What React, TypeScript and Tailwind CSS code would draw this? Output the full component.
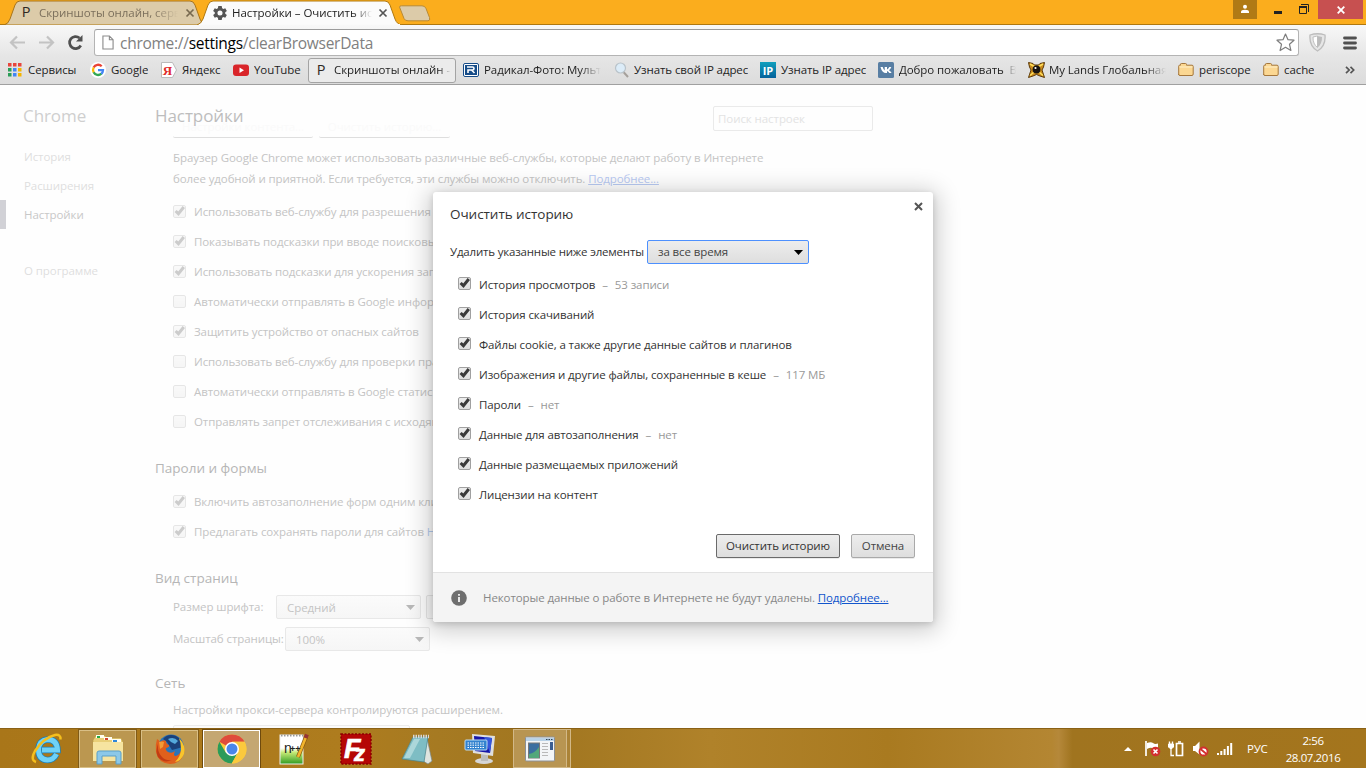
import React from "react";

const FADE = "[mask-image:linear-gradient(to_right,black_82%,transparent)]";

/* ---------- Title bar ---------- */

function PIcon() {
  return <span className="flex h-4 w-4 items-center justify-center text-[14.5px] font-medium leading-none text-[#2e2823]">P</span>;
}

function Gear() {
  return (
    <svg width="16" height="16" viewBox="0 0 24 24" fill="#555">
      <path
        fillRule="evenodd"
        d="M19.8 13.1a8 8 0 0 0 0-2.2l2.5-1.9-2.4-4.1-2.9 1.2a8 8 0 0 0-1.9-1.1L14.6 1.500h-5.200l-.5 3.500a8 8 0 0 0-1.900 1.100L4.100 4.900 1.700 9l2.500 1.900a8 8 0 0 0 0 2.200L1.700 15l2.400 4.100 2.900-1.200a8 8 0 0 0 1.900 1.100l.5 3.500h5.200l.5-3.500a8 8 0 0 0 1.900-1.100l2.900 1.200 2.400-4.100zM12 15.800a3.800 3.800 0 1 1 0-7.600 3.800 3.800 0 0 1 0 7.600z"
      />
    </svg>
  );
}

function TabClose({ color }: { color: string }) {
  return (
    <svg width="10" height="10" viewBox="0 0 10 10" stroke={color} strokeWidth="1.7">
      <path d="M1.500 1.500L8.500 8.500M8.500 1.500L1.500 8.500" />
    </svg>
  );
}

function TitleBar() {
  return (
    <div className="relative flex h-[25px] shrink-0 bg-[#fbad1d] shadow-[inset_0_-1px_#b0780f]">
      <div className="relative ml-[5px] flex h-[25px] w-[192px] items-center pl-[13px]">
        <svg className="absolute left-0 top-0" width="202" height="25" viewBox="0 0 202 25">
          <path d="M0 24.500Q3 24 5 19L10 5Q11.500 1 15 1H185Q188.500 1 190 5L195 19Q197 24.500 200 24.500" fill="#dccba9" stroke="#a9751b" />
        </svg>
        <div className="relative flex items-center">
          <PIcon />
          <span className={`ml-[5px] mt-[1px] w-[139px] overflow-hidden whitespace-nowrap text-[11.5px] leading-[16px] tracking-[-0.05px] text-[#7b6f5c] ${FADE}`}>
            Скриншоты онлайн, серви
          </span>
          <span className="ml-[7px]"><TabClose color="#77694f" /></span>
        </div>
      </div>
      <div className="relative flex h-[25px] w-[206px] items-center pl-[15px]">
        <svg className="absolute left-0 top-0" width="207" height="25" viewBox="0 0 207 25">
          <path d="M0 25Q4 24 6 19L11 5Q12.500 1 16 1H188Q191.500 1 193 5L198 19Q200 24.500 205 25" fill="#fbfbfb" stroke="#b0780f" />
          <path d="M2 25H203" stroke="#fafafa" strokeWidth="2" />
        </svg>
        <div className="relative flex items-center">
          <Gear />
          <span className="ml-[4px] mt-[1px] w-[140px] overflow-hidden whitespace-nowrap text-[11.5px] leading-[16px] tracking-[-0.05px] text-[#222] [mask-image:linear-gradient(to_right,black_86%,transparent)]">
            Настройки – Очистить ист
          </span>
          <span className="ml-[6px]"><TabClose color="#555" /></span>
        </div>
      </div>
      <svg className="-ml-[5px] mt-[5px]" width="34" height="17" viewBox="0 0 34 17">
        <path d="M1.500 2Q1.500 .8 3.500 .8H24Q27 .8 28 3.500L31.500 12.500Q32.500 15.800 30 15.800H10Q7 15.800 6 13.500Z" fill="#dccba9" stroke="#b98a35" />
      </svg>
      <div className="ml-auto flex h-[19px] items-center">
        <div className="flex h-[19px] w-[24px] items-center justify-center bg-[#b07a15]">
          <svg className="mb-[2px]" width="10" height="10" viewBox="0 0 10 10" fill="#fff">
            <circle cx="5" cy="2.800" r="2" />
            <path d="M1 9V7.800Q1 5.800 5 5.800T9 7.800V9Z" />
          </svg>
        </div>
        <svg className="ml-[17px]" width="8" height="19"><path d="M0 12.500H8" stroke="#222" strokeWidth="3" /></svg>
        <svg className="ml-[17px]" width="11" height="19" viewBox="0 0 11 19" fill="none" stroke="#222">
          <path d="M2 4.500H9.500V12" />
          <path d="M.5 7H7.500V13.500H.5Z" />
          <path d="M0 7H8" strokeWidth="2" />
        </svg>
        <div className="ml-[8px] mr-[3px] flex h-[19px] w-[45px] items-center justify-center bg-[#c75050]">
          <svg width="8" height="8" viewBox="0 0 8 8" stroke="#fff" strokeWidth="1.800"><path d="M.7 .7L7.300 7.300M7.300 .7L.7 7.300" /></svg>
        </div>
      </div>
    </div>
  );
}

/* ---------- Toolbar ---------- */

function Toolbar() {
  return (
    <div className="flex h-[31px] shrink-0 items-center bg-linear-to-b from-[#f8f8f8] to-[#e6e6e6] pt-[4px]">
      <svg className="ml-[9px]" width="17" height="15" viewBox="0 0 17 15" fill="none" stroke="#c3c3c3" strokeWidth="2.200">
        <path d="M16 7.500H2M8 1.500L2 7.500L8 13.500" />
      </svg>
      <svg className="ml-[12px]" width="17" height="15" viewBox="0 0 17 15" fill="none" stroke="#c3c3c3" strokeWidth="2.200">
        <path d="M1 7.500H15M9 1.500L15 7.500L9 13.500" />
      </svg>
      <svg className="ml-[12px]" width="18" height="17" viewBox="0 0 18 17" fill="none" stroke="#505050" strokeWidth="2.700">
        <path d="M13.800 11.500A6 6 0 1 1 12.500 4" />
        <path d="M15.500 1V7.500H9Z" fill="#505050" stroke="none" />
      </svg>
      <div className="ml-[9px] flex h-[27px] w-[1205px] items-center rounded-[3px] border border-[#b4b4b4] border-t-[#9b9b9b] bg-white">
        <svg className="ml-[7px]" width="12" height="15" viewBox="0 0 13 16" fill="none" stroke="#8b8b8b" strokeWidth="1.200">
          <path d="M1 1H8L12 5V15H1ZM8 1V5H12" />
        </svg>
        <span className="ml-[6px] text-[15.5px] leading-[20px] tracking-[-0.27px] text-[#808080]">
          chrome://<span className="text-black">settings</span>/clearBrowserData
        </span>
        <svg className="ml-auto mr-[3px]" width="19" height="19" viewBox="0 0 19 19" fill="#fff" stroke="#7d7d7d" strokeWidth="1.200" strokeLinejoin="round">
          <path d="M9.500 1L12 6.700L18 7.200L13.500 11.300L14.900 17.500L9.500 14.300L4.100 17.500L5.500 11.300L1 7.200L7 6.700Z" />
        </svg>
      </div>
      <svg className="ml-[10px]" width="17" height="19" viewBox="0 0 17 19">
        <path d="M1 2Q8.500 -.5 16 2Q17 13 8.500 18Q0 13 1 2Z" fill="#e6e6e6" stroke="#bdbdbd" strokeWidth="1.300" />
        <path d="M4 4Q8.500 3 8.500 3V14.500Q3.800 11 4 4Z" fill="#fff" stroke="#c0c0c0" />
        <path d="M8.500 3L13 4Q13.200 11 8.500 14.500Z" fill="#bcbcbc" />
      </svg>
      <svg className="ml-[17px]" width="14" height="14" viewBox="0 0 14 14" stroke="#505050" strokeWidth="2.800" strokeLinecap="round">
        <path d="M1.500 2H12.500M1.500 7H12.500M1.500 12H12.500" />
      </svg>
    </div>
  );
}

/* ---------- Bookmarks ---------- */

const appColors = ["#e8453c", "#e8453c", "#e8453c", "#2a9d57", "#4285f4", "#f4b400", "#2a9d57", "#4285f4", "#f4b400"];

function AppsIcon() {
  return (
    <svg width="14" height="14" viewBox="0 0 14 14">
      {appColors.map((c, i) => (
        <rect key={i} x={(i % 3) * 5} y={Math.floor(i / 3) * 5} width="3.500" height="3.500" fill={c} />
      ))}
    </svg>
  );
}

function GoogleIcon() {
  return (
    <svg width="16" height="16" viewBox="0 0 16 16">
      <circle cx="8" cy="8" r="8" fill="#fff" />
      <g fill="none" strokeWidth="2.300">
        <path d="M11.700 4.300A5 5 0 0 0 3.600 5.600" stroke="#ea4335" />
        <path d="M3.700 5.500A5 5 0 0 0 3.700 10.500" stroke="#fbbc05" />
        <path d="M3.600 10.300A5 5 0 0 0 11.400 11.700" stroke="#34a853" />
        <path d="M8 8.200H13A5 5 0 0 1 11.300 11.800" stroke="#4285f4" />
      </g>
    </svg>
  );
}

function YandexIcon() {
  return (
    <svg width="16" height="16" viewBox="0 0 16 16">
      <path d="M.5 .5H11.500L15.500 8L11.500 15.500H.5Z" fill="#fff" stroke="#bbb" />
      <text x="6.500" y="12.500" textAnchor="middle" fontFamily="Liberation Serif" fontWeight="700" fontSize="13" fill="#e02a2a">Я</text>
    </svg>
  );
}

function YoutubeIcon() {
  return (
    <svg width="16" height="16" viewBox="0 0 16 16">
      <rect y="2.500" width="16" height="11.500" rx="3" fill="#d9252a" />
      <path d="M6.500 5.500L11 8.200L6.500 11Z" fill="#fff" />
    </svg>
  );
}

function RadikalIcon() {
  return (
    <svg width="16" height="16" viewBox="0 0 16 16" fill="none">
      <rect x=".5" y="1.500" width="15" height="13" rx="1.500" fill="#fff" stroke="#164c88" />
      <rect x="2" y="3" width="12" height="10" fill="#164c88" />
      <path d="M5 11V8H9.500Q11 8 11 6.500T9.500 5H4M8.500 8L11.500 11" stroke="#fff" strokeWidth="1.600" />
    </svg>
  );
}

function LoupeIcon() {
  return (
    <svg width="16" height="16" viewBox="0 0 16 16" fill="none">
      <path d="M9.500 10L14 15" stroke="#a5a09b" strokeWidth="2" />
      <circle cx="6.500" cy="6" r="5" fill="#dcecf8" stroke="#b9c3ca" strokeWidth="1.200" />
    </svg>
  );
}

function IpIcon() {
  return (
    <span className="flex h-4 w-4 items-center justify-center bg-linear-to-b from-[#12a0bd] to-[#07629b] text-[11px] font-bold leading-none text-white">
      IP
    </span>
  );
}

function VkIcon() {
  return (
    <svg width="16" height="16" viewBox="0 0 16 16">
      <rect width="16" height="16" rx="1.500" fill="#587ea3" />
      <path d="M2.500 5H4.700Q5.300 7.500 6.700 8.500V5H9V7.500Q10.500 6.800 11.300 5H13.300Q12.700 7 11 8.200Q12.800 9.300 13.600 11H11.300Q10.500 9.600 9 9.100V11H8Q4 11 2.500 5Z" fill="#fff" />
    </svg>
  );
}

function LandsIcon() {
  return (
    <svg width="17" height="16" viewBox="0 0 17 16">
      <path d="M.5 .5L5 1.500L6.500 3H10.500L12 1.500L16.500 .5L15.500 5L14 8L16.500 15.500L12 14L8.500 12.500L5 14L.5 15.500L3 8L1.500 5Z" fill="#c98a1b" stroke="#5b3a0c" />
      <path d="M2 2L7 5M15 2L10 5M2 13.500L6 10M15 13.500L11 10" stroke="#ffdf5c" strokeWidth="1.500" />
      <circle cx="8.500" cy="7.500" r="3.900" fill="#17120e" />
      <circle cx="7.500" cy="6" r="1.100" fill="#fff" />
    </svg>
  );
}

function FolderIcon() {
  return (
    <svg width="16" height="16" viewBox="0 0 16 16">
      <path d="M.7 13V4.200Q.7 3.200 1.700 3.200H2.500V2.200Q2.500 1.500 3.500 1.500H7.500Q8.500 1.500 8.500 2.500V3.200H14Q15.200 3.200 15.200 4.500V12Q15.200 13.500 14 13.500H2Q.7 13.500 .7 12.500Z" fill="#fbd792" stroke="#a5773c" />
      <path d="M1.500 5H14.500" stroke="#fff0c9" />
    </svg>
  );
}

type Bookmark = { label: string; icon: React.ReactNode; width: string; text: string };

const bookmarks: Bookmark[] = [
  { label: "Сервисы", icon: <AppsIcon />, width: "w-[82px]", text: "ml-[6px]" },
  { label: "Google", icon: <GoogleIcon />, width: "w-[71px]", text: "ml-[5px]" },
  { label: "Яндекс", icon: <YandexIcon />, width: "w-[72px]", text: "ml-[5px]" },
  { label: "YouTube", icon: <YoutubeIcon />, width: "w-[75px]", text: "ml-[5px]" },
  { label: "Скриншоты онлайн -", icon: <PIcon />, width: "w-[148px] h-[25px] pl-[4px] mr-[7px] rounded-[3px] border border-[#a3a3a3] bg-[#ebebeb]", text: "ml-[5px] w-[117px] [mask-image:linear-gradient(to_right,black_90%,transparent)]" },
  { label: "Радикал-Фото: Мультих", icon: <RadikalIcon />, width: "w-[151px]", text: "ml-[5px] w-[117px] " + FADE },
  { label: "Узнать свой IP адрес", icon: <LoupeIcon />, width: "w-[146px]", text: "ml-[4px]" },
  { label: "Узнать IP адрес", icon: <IpIcon />, width: "w-[118px]", text: "ml-[5px]" },
  { label: "Добро пожаловать  Вк", icon: <VkIcon />, width: "w-[150px]", text: "ml-[5px] w-[117px] [mask-image:linear-gradient(to_right,black_88%,transparent)]" },
  { label: "My Lands Глобальная", icon: <LandsIcon />, width: "w-[150px]", text: "ml-[4px] w-[117px] " + FADE },
  { label: "periscope", icon: <FolderIcon />, width: "w-[85px]", text: "ml-[5px]" },
  { label: "cache", icon: <FolderIcon />, width: "w-[82px]", text: "ml-[5px]" },
];

function Bookmarks() {
  return (
    <div className="flex h-[29px] shrink-0 items-center border-b border-[#a0a0a0] bg-linear-to-b from-[#e6e6e6] to-[#dcdcdc] pl-[8px]">
      {bookmarks.map((b) => (
        <div key={b.label} className={`flex shrink-0 items-center ${b.width}`}>
          <span className="shrink-0">{b.icon}</span>
          <span className={`overflow-hidden whitespace-pre text-[11.5px] leading-[18px] tracking-[-0.09px] text-[#1e1e1e] ${b.text}`}>{b.label}</span>
        </div>
      ))}
      <svg width="10" height="8" viewBox="0 0 10 8" fill="none" stroke="#555" strokeWidth="1.700"><path d="M1 .8L4.200 4L1 7.200M5.500 .8L8.700 4L5.500 7.200" /></svg>
    </div>
  );
}

/* ---------- Settings page ---------- */

function Checkbox({ checked = true, faded = false }: { checked?: boolean; faded?: boolean }) {
  return (
    <span className={`relative mb-[1px] flex h-[13px] w-[13px] shrink-0 items-center justify-center rounded-[2px] border border-[#a0a0a0] bg-linear-to-b from-[#ededed] to-[#dedede] ${faded ? "opacity-25" : ""}`}>
      {checked && (
        <svg className="absolute -top-[1px] left-0" width="12" height="12" viewBox="0 0 12 12" fill="none" stroke="#3a3a3a" strokeWidth="3">
          <path d="M1.600 6L4.400 8.700L9.800 2" />
        </svg>
      )}
    </span>
  );
}

function SettingRow({ label, checked, link }: { label: string; checked: boolean; link?: string }) {
  return (
    <div className="flex h-[30px] items-center pl-[18px]">
      <Checkbox checked={checked} faded />
      <span className="ml-[8px] whitespace-nowrap tracking-[-0.1px]">
        {label}
        {link && <span className="text-[#b5cdf0]"> {link}</span>}
      </span>
    </div>
  );
}

const privacyRows: [string, boolean][] = [
  ["Использовать веб-службу для разрешения", true],
  ["Показывать подсказки при вводе поисковых", true],
  ["Использовать подсказки для ускорения загр", true],
  ["Автоматически отправлять в Google информ", false],
  ["Защитить устройство от опасных сайтов", true],
  ["Использовать веб-службу для проверки пра", false],
  ["Автоматически отправлять в Google статис", false],
  ["Отправлять запрет отслеживания с исходящ", false],
];

function FadedSelect({ value }: { value: string }) {
  return (
    <div className="flex h-[24px] w-[145px] items-center justify-between rounded-[2px] border border-[#e8e8e8] bg-linear-to-b from-[#fbfbfb] to-[#f6f6f6] pl-[10px] pr-[5px]">
      <span className="mt-[1px]">{value}</span>
      <svg width="9" height="5"><path d="M0 0H9L4.500 5Z" fill="#b9b9b9" /></svg>
    </div>
  );
}

function SectionTitle({ children, className = "mt-[19px]" }: { children: React.ReactNode; className?: string }) {
  return <h2 className={`h-[24px] text-[13.5px] leading-[24px] tracking-[0px] text-[#b6b6b6] ${className}`}>{children}</h2>;
}

function SettingsPage() {
  return (
    <div className="flex h-full text-[11.5px] leading-[20px] tracking-[-0.075px] text-[#c4c4c4]">
      <nav className="flex w-[155px] shrink-0 flex-col">
        <h1 className="mt-[19px] pl-[23px] text-[17px] leading-[24px] text-[#cfcfcf]">Chrome</h1>
        <div className="mt-[14px] h-[29px] pl-[24px] leading-[29px] text-[#dedede]">История</div>
        <div className="h-[29px] pl-[24px] leading-[29px] text-[#dedede]">Расширения</div>
        <div className="h-[29px] border-l-[6px] border-[#d1d1d6] pl-[18px] leading-[29px] text-[#c8c8c8]">Настройки</div>
        <div className="mt-[27px] h-[29px] pl-[24px] leading-[29px] text-[#dedede]">О программе</div>
      </nav>
      <main className="w-[718px]">
        <header className="relative flex h-[53px] items-start justify-between">
          <div className="absolute bottom-0 left-[18px] flex gap-[6px]">
            <span className="h-[22px] w-[140px] rounded-b-[2px] border-b border-[#dedede] text-center leading-[22px] text-[#fafafa]">Настройки контента...</span>
            <span className="h-[22px] w-[131px] rounded-b-[2px] border-b border-[#dedede] text-center leading-[22px] text-[#fafafa]">Очистить историю...</span>
          </div>
          <h1 className="relative mt-[19px] text-[17px] leading-[24px] text-[#bdbdbd]">Настройки</h1>
          <div className="mt-[21px] flex h-[25px] w-[160px] items-center rounded-[2px] border border-[#eaeaea] pl-[4px] text-[#e3e3e3]">Поиск настроек</div>
        </header>
        <p className="mt-[9px] whitespace-nowrap pl-[18px] leading-[21px]">
          Браузер Google Chrome может использовать различные веб-службы, которые делают работу в Интернете
          <br />
          <span className="tracking-[-0.1px]">более удобной и приятной. Если требуется, эти службы можно отключить. <a className="text-[#b8c9f2] underline">Подробнее...</a></span>
        </p>
        <div className="mt-[8px]">
          {privacyRows.map(([label, checked]) => (
            <SettingRow key={label} label={label} checked={checked} />
          ))}
        </div>
        <SectionTitle>Пароли и формы</SectionTitle>
        <div className="mt-[7px]">
          <SettingRow label="Включить автозаполнение форм одним клик" checked />
          <SettingRow label="Предлагать сохранять пароли для сайтов" checked link="На" />
        </div>
        <SectionTitle>Вид страниц</SectionTitle>
        <div className="mt-[5px] flex items-center pl-[18px]">
          <span className="w-[103px]">Размер шрифта:</span>
          <FadedSelect value="Средний" />
          <div className="ml-[5px] h-[24px] w-[140px] rounded-[2px] border border-[#e5e5e5] bg-[#f9f9f9]" />
        </div>
        <div className="mt-[8px] flex items-center pl-[18px]">
          <span className="w-[112px] whitespace-nowrap">Масштаб страницы:</span>
          <FadedSelect value="100%" />
        </div>
        <SectionTitle className="mt-[20px]">Сеть</SectionTitle>
        <p className="mt-[5px] pl-[18px]">Настройки прокси-сервера контролируются расширением.</p>
        <div className="ml-[18px] mt-[5px] h-[24px] w-[237px] rounded-[2px] border border-[#ececec] bg-[#fbfbfb]" />
      </main>
    </div>
  );
}

/* ---------- Dialog ---------- */

const clearItems: [string, string?][] = [
  ["История просмотров", "53 записи"],
  ["История скачиваний"],
  ["Файлы cookie, а также другие данные сайтов и плагинов"],
  ["Изображения и другие файлы, сохраненные в кеше", "117 МБ"],
  ["Пароли", "нет"],
  ["Данные для автозаполнения", "нет"],
  ["Данные размещаемых приложений"],
  ["Лицензии на контент"],
];

function ClearDialog() {
  return (
    <div className="absolute left-[433px] top-[107px] flex h-[430px] w-[500px] flex-col rounded-[3px] bg-white text-[11.5px] tracking-[-0.11px] text-[#333] shadow-[0_4px_23px_5px_rgba(0,0,0,0.2),0_2px_6px_rgba(0,0,0,0.15)]">
      <div className="flex items-start justify-between pl-[17px] pr-[10px]">
        <h2 className="mt-[12px] text-[13.5px] leading-[20px] tracking-[-0.05px]">Очистить историю</h2>
        <svg className="mt-[10px]" width="9" height="9" viewBox="0 0 9 9" stroke="#555" strokeWidth="2"><path d="M1 1L8 8M8 1L1 8" /></svg>
      </div>
      <div className="mt-[16px] flex items-center pl-[17px]">
        <span className="w-[197px] whitespace-nowrap tracking-[-0.19px]">Удалить указанные ниже элементы</span>
        <div className="flex h-[24px] w-[162px] items-center justify-between rounded-[2px] border border-[#4d90fe] bg-linear-to-b from-[#ededed] to-[#dedede] pl-[10px] pr-[5px] text-[#444]">
          <span>за все время</span>
          <svg width="9" height="5"><path d="M0 0H9L4.500 5Z" fill="#000" /></svg>
        </div>
      </div>
      <div className="mt-[5px] flex flex-col">
        {clearItems.map(([label, extra]) => (
          <div key={label} className="flex h-[30px] items-center pl-[25px]">
            <Checkbox />
            <span className="ml-[8px] mt-[2px] whitespace-nowrap">{label}</span>
            {extra && (
              <span className="ml-[7px] mt-[2px] flex gap-[7px] whitespace-nowrap text-[#999]">
                <span>–</span>
                <span>{extra}</span>
              </span>
            )}
          </div>
        ))}
      </div>
      <div className="mt-[25px] flex justify-end gap-[11px] pr-[18px]">
        <button className="h-[24px] w-[124px] whitespace-nowrap rounded-[2px] border border-[#6a6a6a] bg-linear-to-b from-[#ededed] to-[#dedede] text-[#333] shadow-[0_1px_0_rgba(0,0,0,0.08)]">Очистить историю</button>
        <button className="h-[24px] w-[64px] rounded-[2px] border border-[#a9a9a9] bg-linear-to-b from-[#ededed] to-[#dedede] text-[#444] shadow-[0_1px_0_rgba(0,0,0,0.08)]">Отмена</button>
      </div>
      <div className="mt-auto flex h-[50px] items-center rounded-b-[3px] border-t border-[#e2e2e2] bg-[#f4f4f4] pl-[18px]">
        <svg width="16" height="16" viewBox="0 0 16 16">
          <circle cx="8" cy="8" r="7.800" fill="#6e6e6e" />
          <path d="M8 7V12M8 4V5.800" stroke="#f4f4f4" strokeWidth="1.800" />
        </svg>
        <span className="ml-[16px] whitespace-nowrap tracking-[-0.1px] text-[#888]">
          Некоторые данные о работе в Интернете не будут удалены. <a className="text-[#1155cc] underline">Подробнее...</a>
        </span>
      </div>
    </div>
  );
}

/* ---------- Taskbar ---------- */

function IeIcon() {
  return (
    <svg width="32" height="32" viewBox="0 0 32 32" fill="none">
      <path d="M25.500 21Q22.500 27 16.500 27Q7.500 26.500 7.500 16.500Q8 7.500 16.500 6.500Q26 6.500 26.500 17H11" stroke="#1c7fb8" strokeWidth="6.500" />
      <path d="M25.500 21Q22.500 27 16.500 27Q7.500 26.500 7.500 16.500Q8 7.500 16.500 6.500Q26 6.500 26.500 17H11" stroke="#6fd2f7" strokeWidth="5" />
      <path d="M5 29Q-1 27 4 18Q12 5 24 2Q30 1 29.500 6.500" stroke="#f5bf1c" strokeWidth="2.500" />
    </svg>
  );
}

function ExplorerIcon() {
  return (
    <svg width="32" height="32" viewBox="0 0 32 32">
      <path d="M3 4Q3 2.500 5 2.500H13L15 5H29L31 9V28H1V7Z" fill="#e9cf78" stroke="#b99a45" strokeWidth=".7" />
      <path d="M4 2H12V5H4ZM12 4H20V7H12ZM20 6H29V9H20Z" fill="#fffdf0" />
      <path d="M5 3H8V5H5Z" fill="#28a745" /><path d="M13 5H16V7H13Z" fill="#d4442d" /><path d="M21 7H25V9H21Z" fill="#2f87d8" />
      <path d="M1 9H31V28H1Z" fill="#f6e4a0" />
      <path d="M5 31V20Q5 18 7 18H27Q29 18 29 20V31H24V23H10V31Z" fill="#8cc8e8" stroke="#5b9fc7" />
    </svg>
  );
}

function FirefoxIcon() {
  return (
    <svg width="32" height="32" viewBox="0 0 32 32">
      <circle cx="17" cy="14.500" r="13" fill="#2a74b8" />
      <path d="M9 6Q14 0 22 3Q29 7 29 14L18 17L13 9Z" fill="#1b4079" />
      <path d="M14 6Q20 3 24 8L21 11Q17 10 14 6Z" fill="#55a9dc" />
      <path d="M3 6Q5 7 6 9Q9 6 12 8Q12 11 15 12Q16 14 12 15Q11 17 14 19Q18 21 21 18Q18 25 24 22Q29 18 27 10Q31 14 30 20Q27 31 16 31Q4 30 2 19Q1 12 3 6Z" fill="#e0601c" />
      <path d="M25 5Q32 12 30 21Q27 28 21 29Q27 23 27 16Q27 10 25 5Z" fill="#f9c52b" />
      <path d="M4 11Q3 19 8 24Q12 28 18 27Q10 31 4 24Q1 18 4 11Z" fill="#c23c14" />
      <path d="M5 9Q8 8 10 9L9 14L6 16Z" fill="#f49a35" />
    </svg>
  );
}

function ChromeIcon() {
  return (
    <svg width="32" height="32" viewBox="0 0 32 32">
      <circle cx="16" cy="16" r="14.500" fill="#fbc93d" />
      <path d="M16 16L3.400 8.800A14.500 14.500 0 0 1 28.600 8.800H16Z" fill="#df4b3c" />
      <path d="M3.400 8.800A14.500 14.500 0 0 0 15.600 30.500L22 19.500L16 16L9.700 19.600Z" fill="#2b9b5a" />
      <path d="M22 19L16 30.500A14.500 14.500 0 0 0 28.600 8.800H16Z" fill="#fbc93d" />
      <circle cx="16" cy="16" r="7" fill="#fff" /><circle cx="16" cy="16" r="5.500" fill="#4a86ea" />
    </svg>
  );
}

function NotepadPlusIcon() {
  return (
    <svg width="32" height="34" viewBox="0 0 32 34">
      <defs><linearGradient id="np" x1="0" y1="0" x2="0" y2="1"><stop offset=".45" stopColor="#fff" /><stop offset=".6" stopColor="#c6ea77" /><stop offset="1" stopColor="#2f9b22" /></linearGradient></defs>
      <rect x="3" y="3" width="23" height="29" fill="url(#np)" stroke="#eee" />
      <path d="M4 3.500H26" stroke="#999" strokeWidth="2" strokeDasharray="1.500 1.500" />
      <path d="M29 5L21 25" stroke="#8a5a10" strokeWidth="4" /><path d="M29 5L21 25" stroke="#f3b52d" strokeWidth="2.600" />
      <path d="M30 2.500L28.500 6" stroke="#963434" strokeWidth="4" />
      <text x="7" y="21" fontFamily="Liberation Sans" fontSize="14" fill="#222" letterSpacing="-1.500">n</text>
      <text x="13" y="19.500" fontFamily="Liberation Sans" fontWeight="700" fontSize="9" fill="#222">++</text>
    </svg>
  );
}

function FileZillaIcon() {
  return (
    <svg width="32" height="32" viewBox="0 0 32 32" fontFamily="Liberation Sans" fontWeight="700" fontStyle="italic" fill="#fff" stroke="#fff">
      <rect x="1" y="1" width="30" height="30" fill="#b50606" stroke="#8c0000" strokeWidth="1.500" strokeDasharray="2 1.500" />
      <text x="4" y="25" fontSize="27" strokeWidth=".7">
        F<tspan x="14" y="27.500" fontSize="22">z</tspan>
      </text>
    </svg>
  );
}

function NotepadIcon() {
  return (
    <svg width="32" height="32" viewBox="0 0 32 32">
      <path d="M26 5L31 28L27 31L22 28Z" fill="#dfe5df" stroke="#78878a" strokeWidth=".7" />
      <path d="M12 4H27L23 29L1 26Z" fill="#7ebdc4" stroke="#4a838a" strokeWidth=".7" />
      <path d="M13 6H19L9 25L3 25Z" fill="#c1e2e4" opacity=".7" />
      <path d="M12 3.500H28" stroke="#d8d8d8" strokeWidth="3.500" strokeDasharray="1.500 1" />
    </svg>
  );
}

function RemoteIcon() {
  return (
    <svg width="34" height="32" viewBox="0 0 34 32">
      <ellipse cx="21" cy="28" rx="9" ry="3" fill="#d6d6d6" /><path d="M18 21H25V28H18Z" fill="#bdbdbd" />
      <path d="M9 1L32 3L30 23L10 20Z" fill="#dfdfdf" /><path d="M11 3L29 5L27 20L12 18Z" fill="#1616a8" /><path d="M21 4L29 5L27 20Z" fill="#3458dc" />
      <rect x="2" y="7" width="22" height="10" rx="1" fill="#3182cf" stroke="#bcdcf3" />
      <path d="M4.500 10H22M4.500 12.200H22M4.500 14.500H22" stroke="#fff" strokeDasharray="1.500 1" />
    </svg>
  );
}

function WindowIcon() {
  return (
    <svg width="32" height="28" viewBox="0 0 32 28">
      <rect x="1.500" y="2" width="29" height="24" rx="1" fill="#f3f5f7" stroke="#8b9096" />
      <path d="M2 3H30V6H2Z" fill="#b9d2e7" /><path d="M22 4.500H29" stroke="#345" strokeDasharray="1.500 1" />
      <rect x="4.500" y="8" width="11" height="15" fill="#3b6ea0" stroke="#777" /><path d="M5 23V19Q11 18 15 12V23Z" fill="#52a77b" />
      <path d="M18 8.500H24M18 11.500H24M18 14.500H24M18 17.500H24M18 20.500H24" stroke="#b9b9b9" />
      <rect x="26" y="7" width="3" height="8" fill="#3b5e92" />
    </svg>
  );
}

function TaskButton({ children, active = false }: { children: React.ReactNode; active?: boolean }) {
  return (
    <div className={`flex h-[40px] w-[59px] items-center justify-center border shadow-[inset_0_0_0_1px_rgba(255,240,200,0.45)] ${active ? "border-[#6e4a0d] bg-[#c4a772] outline outline-1 -outline-offset-2 outline-white" : "border-[#805b18] bg-[#bb9750]"}`}>
      {children}
    </div>
  );
}

function Taskbar() {
  return (
    <footer className="flex h-[40px] shrink-0 items-center border-t border-[#8a6116] bg-[linear-gradient(90deg,#a97619_0%,#ae7c1e_25%,#a67a22_32%,#a17620_40%,#b0822a_52%,#a97a20_65%,#b48632_77%,#b5883a_77.500%,#a0741f_78.500%,#a4751d_100%)]">
      <div className="flex w-[78px] justify-center pl-[15px]"><IeIcon /></div>
      <div className="flex gap-[3px]">
        <TaskButton><ExplorerIcon /></TaskButton>
        <TaskButton><FirefoxIcon /></TaskButton>
        <TaskButton active><ChromeIcon /></TaskButton>
      </div>
      <div className="ml-[16px]"><NotepadPlusIcon /></div>
      <div className="ml-[31px]"><FileZillaIcon /></div>
      <div className="ml-[29px]"><NotepadIcon /></div>
      <div className="ml-[30px]"><RemoteIcon /></div>
      <div className="ml-[16px] flex h-[39px] items-stretch">
        <div className="flex w-[54px] items-center justify-center border border-[#d2b887] bg-[#b89552]"><WindowIcon /></div>
        <div className="w-[4px] border border-l-0 border-[#d2b887] bg-[#ab8337]" />
      </div>
      <div className="ml-auto flex items-center text-[12px] text-white">
        <svg width="8" height="4"><path d="M0 4L4 0L8 4Z" fill="#fff" /></svg>
        <svg className="ml-[12px]" width="18" height="18" viewBox="0 0 18 18">
          <path d="M2 1V16" stroke="#fff" strokeWidth="1.700" /><path d="M3 3Q7 1.500 9 3T14 3.500V9Q11 10 9 8.500T3 9Z" fill="#fff" />
          <circle cx="11.500" cy="11.500" r="4.800" fill="#d32f2f" /><path d="M9.500 9.500L13.500 13.500M13.500 9.500L9.500 13.500" stroke="#fff" strokeWidth="1.600" />
        </svg>
        <svg className="ml-[6px]" width="17" height="17" viewBox="0 0 17 17" fill="none" stroke="#fff">
          <path d="M1.500 1.500V4M4.500 1.500V4" strokeWidth="1.400" /><path d="M.5 4H5.500V7L4 8.500H2L.5 7Z" fill="#fff" /><path d="M3 8V15.500H6" strokeWidth="1.300" />
          <path d="M8.500 3.500H14.500V15.500H8.500Z" strokeWidth="1.700" /><path d="M10 2H13" strokeWidth="1.500" />
        </svg>
        <svg className="ml-[7px]" width="17" height="17" viewBox="0 0 17 17">
          <path d="M1 6H3L7.500 1.500V14.500L3 11H1Z" fill="#fff" />
          <circle cx="11.500" cy="11.500" r="4" fill="#fff" stroke="#d32f2f" strokeWidth="1.800" /><path d="M8.500 9L14.500 14" stroke="#d32f2f" strokeWidth="1.800" />
        </svg>
        <svg className="ml-[8px]" width="16" height="14" viewBox="0 0 16 14" fill="#fff">
          <path d="M0 11H2V13H0ZM3.300 9H5.300V13H3.300ZM6.600 7H8.600V13H6.600ZM9.900 4H11.900V13H9.900ZM13.200 1H15.200V13H13.200Z" />
        </svg>
        <span className="ml-[14px] w-[23px] text-[11.5px] tracking-[-0.2px]">РУС</span>
        <div className="ml-[11px] mr-[21px] w-[64px] text-center text-[11.5px] leading-[17px] tracking-[-0.4px]">
          <div>2:56</div>
          <div>28.07.2016</div>
        </div>
      </div>
    </footer>
  );
}

export default function App() {
  return (
    <div className="flex h-[768px] w-[1366px] flex-col overflow-hidden bg-white font-['Open_Sans','Noto_Sans',sans-serif]">
      <TitleBar />
      <Toolbar />
      <Bookmarks />
      <div className="relative h-[643px] overflow-hidden bg-[#fefefe]">
        <SettingsPage />
        <ClearDialog />
      </div>
      <Taskbar />
    </div>
  );
}
